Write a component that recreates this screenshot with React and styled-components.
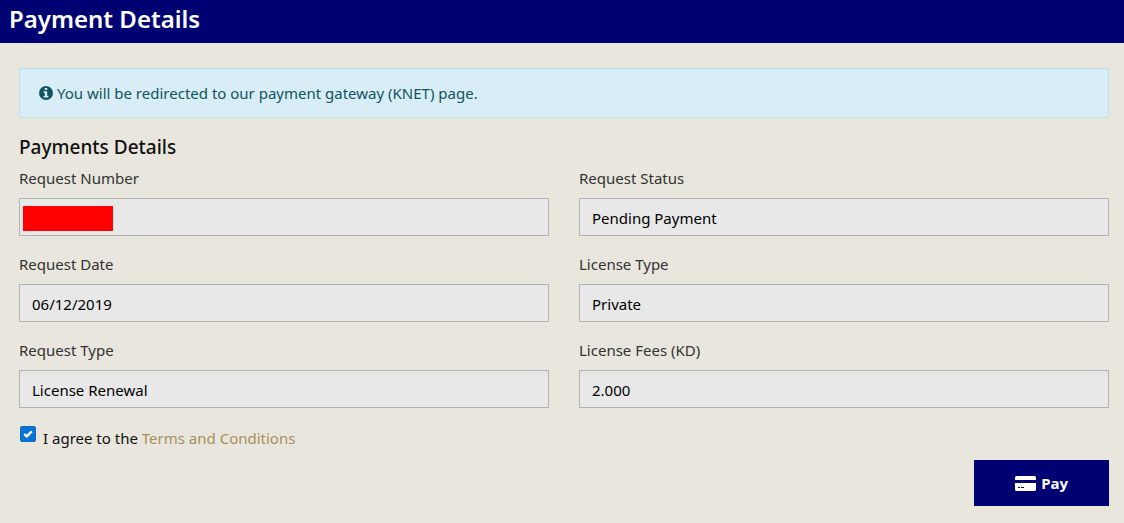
import { useState } from 'react';
import styled, { createGlobalStyle } from 'styled-components';

const colors = {
  navy: '#000274',
  page: '#e8e6dd',
  field: '#e8e8e8',
  border: '#b3b3b3',
  gold: '#a98f5e',
};

const FIELDS = [
  { id: 'requestNumber', label: 'Request Number', value: '', hidden: true },
  { id: 'requestStatus', label: 'Request Status', value: 'Pending Payment' },
  { id: 'requestDate', label: 'Request Date', value: '06/12/2019' },
  { id: 'licenseType', label: 'License Type', value: 'Private' },
  { id: 'requestType', label: 'Request Type', value: 'License Renewal' },
  { id: 'licenseFees', label: 'License Fees (KD)', value: '2.000' },
];

function InfoIcon() {
  return (
    <svg width="14" height="14" viewBox="0 0 14 14" aria-hidden="true">
      <circle cx="7" cy="7" r="7" fill="currentColor" />
      <path fill="#d9edf6" d="M5.8 2h2.400v2h-2.400zM4.600 5.300h3.600v4.700h1.200v1.600H4.600V10h1.200V6.900H4.600z" />
    </svg>
  );
}

function CardIcon() {
  return (
    <svg width="21" height="15" viewBox="0 0 21 15" aria-hidden="true">
      <path
        fill="currentColor"
        fillRule="evenodd"
        d="M1.5 0h18A1.5 1.5 0 0 1 21 1.5V4H0V1.5A1.5 1.5 0 0 1 1.5 0zM0 7h21v6.500a1.5 1.5 0 0 1-1.500 1.500h-18A1.5 1.5 0 0 1 0 13.500zM3 11v1h2v-1zM6 11v1h3v-1z"
      />
    </svg>
  );
}

function Field(props) {
  const { id, label, value, hidden } = props;

  return (
    <StyledField>
      <StyledLabel htmlFor={id}>{label}</StyledLabel>
      <StyledInputWrapper>
        <StyledInput id={id} type="text" value={value} readOnly />
        {hidden && <StyledRedaction />}
      </StyledInputWrapper>
    </StyledField>
  );
}

function App() {
  const [agreed, setAgreed] = useState(true);

  return (
    <>
      <GlobalStyle />
      <StyledHeader>
        <StyledTitle>Payment Details</StyledTitle>
      </StyledHeader>
      <StyledMain>
        <StyledAlert role="status">
          <InfoIcon />
          You will be redirected to our payment gateway (KNET) page.
        </StyledAlert>
        <StyledSubtitle>Payments Details</StyledSubtitle>
        <StyledFieldGrid>
          {FIELDS.map((field) => (
            <Field key={field.id} {...field} />
          ))}
        </StyledFieldGrid>
        <StyledAgreement>
          <StyledCheckWrapper>
            <StyledCheckbox
              id="agree"
              type="checkbox"
              checked={agreed}
              onChange={(e) => setAgreed(e.target.checked)}
            />
            {agreed && (
              <StyledCheckMark width="10" height="8" viewBox="0 0 10 8" aria-hidden="true">
                <path d="M1.200 4l2.500 2.400L8.800 1.400" />
              </StyledCheckMark>
            )}
          </StyledCheckWrapper>
          <label htmlFor="agree">
            I agree to the <StyledLink href="#terms">Terms and Conditions</StyledLink>
          </label>
        </StyledAgreement>
        <StyledActions>
          <StyledPayButton type="button">
            <CardIcon />
            Pay
          </StyledPayButton>
        </StyledActions>
      </StyledMain>
    </>
  );
}

const GlobalStyle = createGlobalStyle`
  *, *::before, *::after {
    box-sizing: border-box;
  }
  body {
    margin: 0;
    background-color: ${colors.page};
    color: #111;
    font-family: 'Noto Sans', sans-serif;
    font-size: 15px;
    line-height: 24px;
  }
`;

const StyledHeader = styled.header`
  padding: 3px 9px 8px;
  background-color: ${colors.navy};
  color: #fff;
`;

const StyledTitle = styled.h1`
  margin: 0;
  font-size: 24px;
  font-weight: 600;
  line-height: 32px;
`;

const StyledMain = styled.main`
  padding: 25px 15px 17px 19px;
`;

const StyledAlert = styled.div`
  display: flex;
  align-items: center;
  gap: 4px;
  padding: 12px 19px;
  border: 1px solid #bcdfe8;
  background-color: #d9edf6;
  color: #0f5560;
`;

const StyledSubtitle = styled.h2`
  margin: 17px 0 7px;
  font-size: 19px;
  font-weight: 500;
  line-height: 24px;
`;

const StyledFieldGrid = styled.div`
  display: grid;
  grid-template-columns: 1fr 1fr;
  gap: 16px 30px;
`;

const StyledField = styled.div`
  display: flex;
  flex-direction: column;
  gap: 8px;
`;

const StyledLabel = styled.label`
  color: #333;
`;

const StyledInputWrapper = styled.div`
  position: relative;
  display: flex;
`;

const StyledInput = styled.input`
  width: 100%;
  height: 38px;
  padding: 4px 12px 2px;
  border: 1px solid ${colors.border};
  border-radius: 0;
  background-color: ${colors.field};
  color: #000;
  font: inherit;
`;

const StyledRedaction = styled.span`
  position: absolute;
  top: 8px;
  left: 4px;
  width: 90px;
  height: 25px;
  background-color: #f00;
`;

const StyledAgreement = styled.div`
  display: flex;
  align-items: flex-start;
  gap: 7px;
  margin-top: 18px;
`;

const StyledCheckWrapper = styled.span`
  display: grid;
  place-items: center;
  margin-left: 1px;
`;

const StyledCheckbox = styled.input`
  grid-area: 1 / 1;
  appearance: none;
  width: 16px;
  height: 16px;
  margin: 0;
  border: 1px solid #0a6fcb;
  border-radius: 2px;
  background-color: ${(props) => (props.checked ? '#0a74d4' : '#fff')};
`;

const StyledCheckMark = styled.svg`
  grid-area: 1 / 1;
  fill: none;
  stroke: #fff;
  stroke-width: 2.4;
  pointer-events: none;
`;

const StyledLink = styled.a`
  color: ${colors.gold};
  text-decoration: none;
`;

const StyledActions = styled.div`
  display: flex;
  justify-content: flex-end;
  margin-top: 10px;
`;

const StyledPayButton = styled.button`
  display: flex;
  align-items: center;
  justify-content: center;
  gap: 5px;
  padding: 11px 41px;
  border: none;
  background-color: ${colors.navy};
  color: #fff;
  font: inherit;
  font-weight: 700;
`;

export default App;
